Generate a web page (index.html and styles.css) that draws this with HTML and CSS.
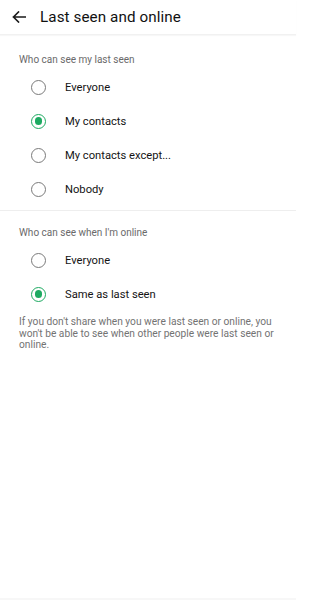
FILE: index.html
```html
<!DOCTYPE html>
<html>
<head>
<meta charset="utf-8">
<link rel="stylesheet" href="styles.css">
</head>
<body>
<div class="app">
  <header class="topbar">
    <svg class="back" width="14" height="12" viewBox="0 0 14 12"><path d="M13.5 6H1.5M6.5 1L1.5 6l5 5" fill="none" stroke="#1a1a1a" stroke-width="1.6" stroke-linecap="square"/></svg>
    <h1 class="title">Last seen and online</h1>
  </header>
  <section class="group first">
    <div class="label">Who can see my last seen</div>
    <div class="row"><span class="radio"></span><span class="opt">Everyone</span></div>
    <div class="row"><span class="radio on"></span><span class="opt">My contacts</span></div>
    <div class="row"><span class="radio"></span><span class="opt">My contacts except...</span></div>
    <div class="row"><span class="radio"></span><span class="opt">Nobody</span></div>
  </section>
  <section class="group second">
    <div class="label">Who can see when I'm online</div>
    <div class="row"><span class="radio"></span><span class="opt">Everyone</span></div>
    <div class="row"><span class="radio on"></span><span class="opt">Same as last seen</span></div>
    <p class="note">If you don't share when you were last seen or online, you won't be able to see when other people were last seen or online.</p>
  </section>
  <div class="navline"></div>
</div>
</body>
</html>
```
FILE: styles.css
```css
html, body { margin: 0; padding: 0; background: #fff; }
body { font-family: Roboto, "Noto Sans", sans-serif; color: #111; }
.app { width: 296px; height: 600px; display: flex; flex-direction: column; }
.topbar { height: 34px; display: flex; align-items: center; border-bottom: 1px solid #f1f1f1; box-shadow: 0 1px 1px rgba(0,0,0,0.03); }
.back { margin-left: 12px; margin-right: 14px; }
.title { margin: 0; font-size: 15.2px; font-weight: 400; color: #111; letter-spacing: 0.1px; }
.group { display: flex; flex-direction: column; }
.first { padding-top: 19px; padding-bottom: 4px; border-bottom: 1px solid #eeeeee; }
.second { padding-top: 16px; }
.label { padding-left: 19px; font-size: 10px; line-height: 12px; color: #6a6a6a; font-weight: 400; margin-bottom: 4px; }
.row { height: 34px; display: flex; align-items: center; padding-left: 31px; }
.radio { width: 15px; height: 15px; box-sizing: border-box; border: 1.6px solid #7a7a7a; border-radius: 50%; margin-right: 19px; display: flex; align-items: center; justify-content: center; }
.radio.on { border-color: #1daa61; }
.radio.on::after { content: ""; width: 7.5px; height: 7.5px; border-radius: 50%; background: #1daa61; }
.opt { font-size: 11.2px; color: #141414; }
.note { margin: 5px 0 0; padding: 0 14px 0 19px; font-size: 10.2px; line-height: 11.5px; color: #737373; }
.navline { margin-top: auto; height: 2px; background: #f7f7f7; }
```
